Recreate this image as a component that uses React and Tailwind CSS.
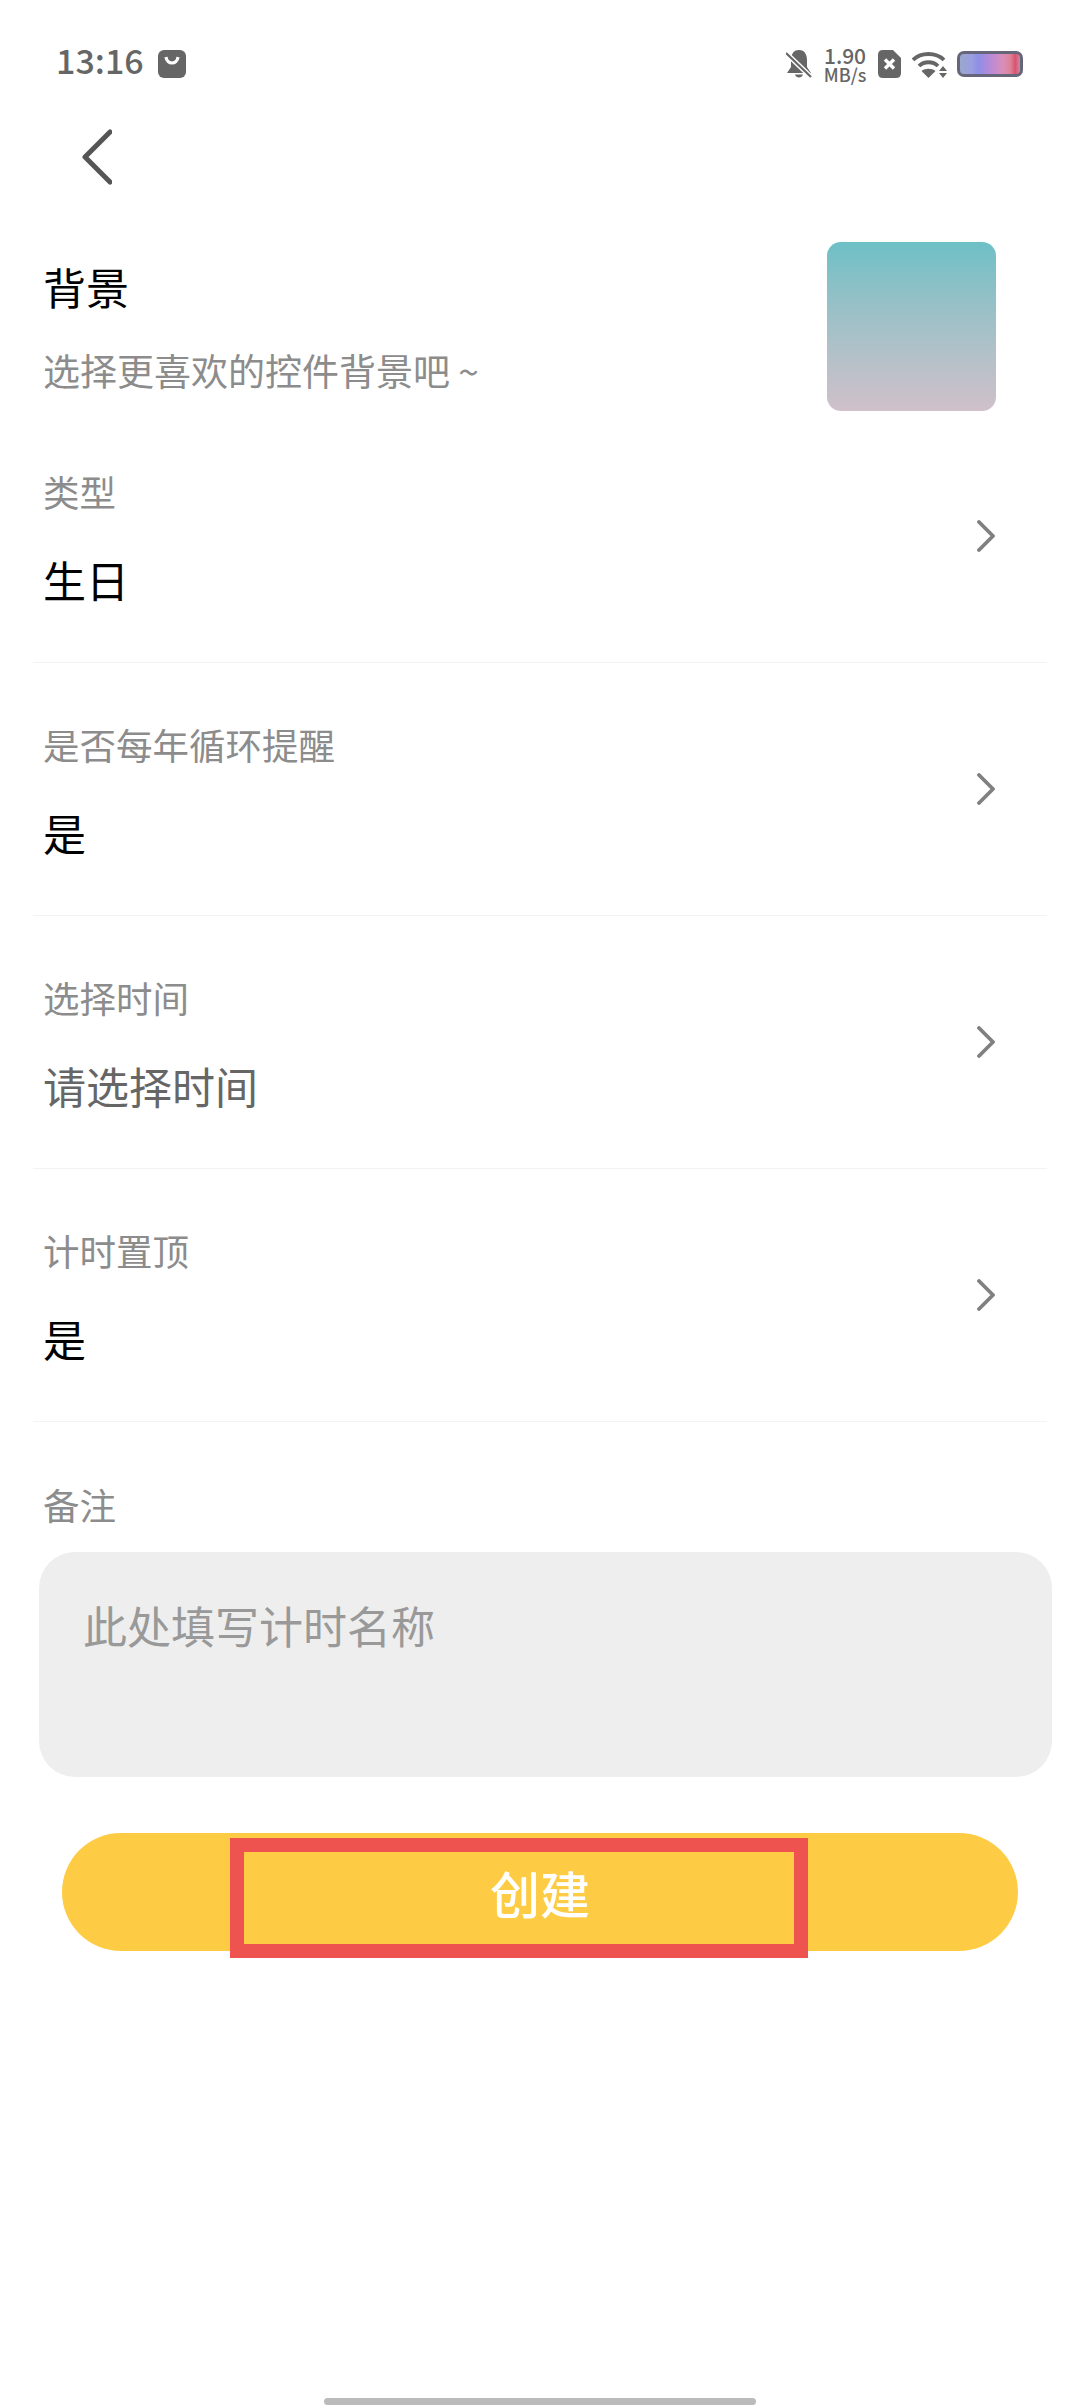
// App.jsx
import React from 'react';

const Chevron = () => (
  <svg width="18" height="32" viewBox="0 0 18 32" fill="none" className="mt-[3px] shrink-0">
    <path d="M2 2 L16 16 L2 30" stroke="#808080" strokeWidth="3.8" strokeLinecap="round" strokeLinejoin="round" />
  </svg>
);

const StatusBar = () => (
  <div className="flex h-[64px] items-center justify-between pl-[56px] pr-[57px] pt-[2px]">
    <div className="flex items-center">
      <span className="mb-[8px] text-[34px] font-medium leading-none text-[#666666]">13:16</span>
      <svg width="28" height="28" viewBox="0 0 28 28" className="ml-[14px]">
        <rect width="28" height="28" rx="6" fill="#666666" />
        <path d="M8 7 C9 15 19 15 20 7" stroke="#fff" strokeWidth="3.2" fill="none" />
      </svg>
    </div>
    <div className="flex items-center">
      <svg width="26" height="28" viewBox="0 0 26 28">
        <path d="M13 0 C19 0 21 5 21 10 L21 17 L25 23 L1 23 L5 17 L5 10 C5 5 7 0 13 0 Z M9 24.5 L17 24.5 C16 28.5 10 28.5 9 24.5 Z" fill="#666666" />
        <path d="M0 3 L25 27" stroke="#fff" strokeWidth="5" />
        <path d="M0 3 L25 27" stroke="#666666" strokeWidth="2.2" />
      </svg>
      <div className="ml-[11px] flex w-[44px] flex-col items-center text-[#666666]">
        <span className="text-[21px] font-medium leading-[20px]">1.90</span>
        <span className="text-[18px] font-medium leading-[18px]">MB/s</span>
      </div>
      <svg width="23" height="28" viewBox="0 0 23 28" className="ml-[11px]">
        <path d="M5 0 L15 0 L23 8 L23 23 Q23 28 18 28 L5 28 Q0 28 0 23 L0 5 Q0 0 5 0 Z" fill="#666666" />
        <path d="M7 9.5 L16 18.5 M16 9.5 L7 18.5" stroke="#fff" strokeWidth="3.4" />
      </svg>
      <svg width="35" height="27" viewBox="0 0 35 27" className="ml-[11px]">
        <g fill="none" stroke="#666666" strokeWidth="3.8">
          <path d="M1 9 C9 1 24 1 32 9" />
          <path d="M7 15 C12 10 21 10 26 15" />
        </g>
        <path d="M9.5 20 C13 17 20 17 23.5 20 L16.5 27 Z" fill="#666666" />
        <path d="M31 15 L35 20 L27 20 Z M27 22 L35 22 L31 27 Z" fill="#666666" />
      </svg>
      <div className="ml-[10px] h-[26px] w-[66px] rounded-[7px] border-[3px] border-[#66667a] bg-[linear-gradient(90deg,#9aa8cc_0%,#9a9ee0_20%,#8f8ee8_30%,#c08ad2_55%,#d88eb8_72%,#dd8298_84%,#dc5270_92%,#c98aa0_100%)]" />
    </div>
  </div>
);

const Row = ({ label, value, muted }) => (
  <div className="flex h-[253px] items-center justify-between border-b-[1px] border-[#f3f3f3] pb-[3px] pl-[10px] pr-[52px]">
    <div className="flex flex-col">
      <span className="text-[36.5px] leading-[52px] text-[#8c8c8c]">{label}</span>
      <span className={`mt-[36px] text-[43px] leading-[50px] ${muted ? 'text-[#666666]' : 'text-black'}`}>{value}</span>
    </div>
    <Chevron />
  </div>
);

export default function App() {
  return (
    <div className="flex h-[2408px] w-[1080px] flex-col overflow-hidden bg-white font-['Noto_Sans_CJK_SC','Noto_Sans',sans-serif]">
      <div className="h-[31px]" />
      <StatusBar />
      {/* back */}
      <div className="pl-[80px] pt-[34px]">
        <svg width="32" height="56" viewBox="0 0 32 56" fill="none">
          <path d="M30 3 L5 28 L30 53" stroke="#555555" strokeWidth="5" strokeLinecap="round" strokeLinejoin="round" />
        </svg>
      </div>
      {/* background picker */}
      <div className="mt-[57px] flex items-start justify-between pl-[43px] pr-[84px]">
        <div className="flex flex-col pt-[16px]">
          <span className="text-[43px] leading-[56px] text-black">背景</span>
          <span className="mt-[30px] text-[37px] leading-[52px] text-[#8c8c8c]">选择更喜欢的控件背景吧 ~</span>
        </div>
        <div className="h-[169px] w-[169px] rounded-[14px] bg-gradient-to-b from-[#6cc0c5] to-[#d0c0ca]" />
      </div>
      {/* rows */}
      <div className="mx-[33px] mt-[-1px]">
        <Row label="类型" value="生日" />
        <Row label="是否每年循环提醒" value="是" />
        <Row label="选择时间" value="请选择时间" muted />
        <Row label="计时置顶" value="是" />
      </div>
      <div className="pl-[43px] pt-[57px]">
        <span className="block text-[36.5px] leading-[52px] text-[#8c8c8c]">备注</span>
      </div>
      <div className="ml-[39px] mt-[21px] h-[225px] w-[1013px] rounded-[36px] bg-[#eeeeee] pl-[44px] pt-[45px]">
        <span className="block text-[44px] leading-[56px] text-[#999999]">此处填写计时名称</span>
      </div>
      {/* create button */}
      <div className="relative ml-[62px] mt-[56px] flex h-[118px] w-[956px] items-center justify-center rounded-full bg-[#fecc44]">
        <span className="text-[50px] font-medium leading-none text-white">创建</span>
        <div className="absolute left-[168px] top-[5px] h-[120px] w-[578px] border-[14px] border-[#ef5350]" />
      </div>
      <div className="flex-1" />
      <div className="mx-auto mb-[3px] h-[7px] w-[432px] rounded-full bg-[#bbbbbb]" />
    </div>
  );
}
